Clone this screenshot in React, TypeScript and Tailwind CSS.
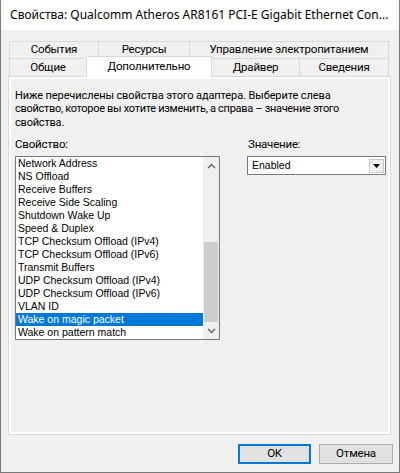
import { useState } from "react";

const ui = "font-['Segoe_UI',Roboto,sans-serif]";
const uiText = "text-[11.5px] tracking-[-0.2px]";
const titleFont = "font-['Segoe_UI','Noto_Sans',sans-serif]";
const classic = "font-['Liberation_Sans',Arial,sans-serif] tracking-normal";

const topTabs = [
  { label: "События", w: "w-[90px]" },
  { label: "Ресурсы", w: "w-[91px]" },
  { label: "Управление электропитанием", w: "w-[199px]" },
];

const bottomTabs = [
  { label: "Общие", w: "w-[78px]", active: false },
  { label: "Дополнительно", w: "w-[125px]", active: true },
  { label: "Драйвер", w: "w-[88px]", active: false },
  { label: "Сведения", w: "w-[89px]", active: false },
];

const properties = [
  "Network Address",
  "NS Offload",
  "Receive Buffers",
  "Receive Side Scaling",
  "Shutdown Wake Up",
  "Speed & Duplex",
  "TCP Checksum Offload (IPv4)",
  "TCP Checksum Offload (IPv6)",
  "Transmit Buffers",
  "UDP Checksum Offload (IPv4)",
  "UDP Checksum Offload (IPv6)",
  "VLAN ID",
  "Wake on magic packet",
  "Wake on pattern match",
];

const Chevron = ({ up }: { up?: boolean }) => (
  <svg width="9" height="6" viewBox="0 0 9 6" fill="none">
    <path
      d={up ? "M1 5 L4.5 1.5 L8 5" : "M1 1 L4.5 4.5 L8 1"}
      stroke="#606060"
      strokeWidth="1.4"
    />
  </svg>
);

const App = () => {
  const [selected, setSelected] = useState<number>(12);

  return (
    <div
      className={
        ui +
        " w-[400px] h-[473px] bg-[#f0f0f0] border-l border-r border-b border-[#7a7a7a] flex flex-col text-black overflow-hidden"
      }
    >
      {/* title bar */}
      <div className="h-[30px] bg-white flex items-center justify-between pl-[9px] pr-[10px] shrink-0">
        <span className={titleFont + " text-[12px] leading-none whitespace-nowrap"}>
          Свойства: Qualcomm Atheros AR8161 PCI-E Gigabit Ethernet Con...
        </span>
        <svg width="11" height="11" viewBox="0 0 11 11" fill="none">
          <path d="M0.5 0.5 L10.5 10.5 M10.5 0.5 L0.5 10.5" stroke="#111" strokeWidth="1" />
        </svg>
      </div>

      <div className={uiText + " flex flex-col pl-[7px] pt-[11px]"}>
        {/* tabs */}
        <div className="ml-[1px] flex h-[17px]">
          {topTabs.map((t, i) => (
            <div
              key={t.label}
              className={
                t.w +
                " h-full flex items-center justify-center border-t border-r border-[#d9d9d9] " +
                (i === 0 ? "border-l" : "")
              }
            >
              {t.label}
            </div>
          ))}
        </div>
        <div className="ml-[1px] flex items-start h-[18px]">
          {bottomTabs.map((t, i) =>
            t.active ? (
              <div
                key={t.label}
                className={
                  t.w +
                  " h-[21px] -mt-[2px] relative z-10 bg-white border-t border-r border-[#d9d9d9] flex justify-center pt-[1px] leading-[16px]"
                }
              >
                {t.label}
              </div>
            ) : (
              <div
                key={t.label}
                className={
                  t.w +
                  " h-[18px] flex items-center justify-center border-t border-r border-[#d9d9d9] " +
                  (i === 0 ? "border-l" : "")
                }
              >
                {t.label}
              </div>
            )
          )}
        </div>

        {/* page */}
        <div className="w-[383px] h-[359px] border border-[#d9d9d9]">
          <div className="h-full border-2 border-white bg-[#f0f0f0] pl-[4px] pt-[10px] leading-[13.3px]">
            <p className="whitespace-nowrap text-[11px]">
              <span className="tracking-[-0.1px]">
                Ниже перечислены свойства этого адаптера. Выберите слева
              </span>
              <br />
              <span className="tracking-[-0.3px]">
                свойство, которое вы хотите изменить, а справа – значение этого
              </span>
              <br />
              свойства.
            </p>

            <div className="flex mt-[9px]">
              <div className="w-[205px] flex flex-col">
                <span className="mb-[5px]">Свойство:</span>
                <div className="h-[184px] border border-[#7a7a7a] bg-white flex">
                  <ul className={classic + " flex-1 text-[10.5px]"}>
                    {properties.map((p, i) => (
                      <li
                        key={p}
                        onClick={() => setSelected(i)}
                        className={
                          "h-[13px] leading-[13px] pl-[2px] whitespace-nowrap cursor-default " +
                          (i === selected ? "bg-[#0078d7] text-white" : "")
                        }
                      >
                        {p}
                      </li>
                    ))}
                  </ul>
                  <div className="w-[16px] bg-[#f0f0f0] flex flex-col">
                    <div className="h-[17px] flex items-center justify-center">
                      <Chevron up />
                    </div>
                    <div className="h-[68px]" />
                    <div className="h-[80px] mx-[1px] bg-[#cdcdcd]" />
                    <div className="h-[17px] flex items-center justify-center">
                      <Chevron />
                    </div>
                  </div>
                </div>
              </div>

              <div className="ml-[27px] w-[139px] flex flex-col">
                <span className="mb-[5px] pl-[1px]">Значение:</span>
                <div className="h-[19px] border border-[#7a7a7a] bg-white flex items-center justify-between">
                  <span className={classic + " text-[10.5px] pl-[4px]"}>Enabled</span>
                  <div className="w-[15px] h-[14px] mr-[1px] bg-[#f0f0f0] border border-[#c8c8c8] flex items-center justify-center">
                    <svg width="7" height="4" viewBox="0 0 7 4">
                      <path d="M0 0 H7 L3.5 4 Z" fill="#000" />
                    </svg>
                  </div>
                </div>
              </div>
            </div>
          </div>
        </div>

        {/* buttons */}
        <div className="flex justify-end gap-[8px] mt-[9px] pr-[6px]">
          <button className="w-[73px] h-[20px] bg-[#e1e1e1] border-2 border-[#0078d7] flex items-center justify-center leading-none">
            OK
          </button>
          <button className="w-[74px] h-[20px] bg-[#e1e1e1] border border-[#adadad] flex items-center justify-center leading-none">
            Отмена
          </button>
        </div>
      </div>
    </div>
  );
};

export default App;
